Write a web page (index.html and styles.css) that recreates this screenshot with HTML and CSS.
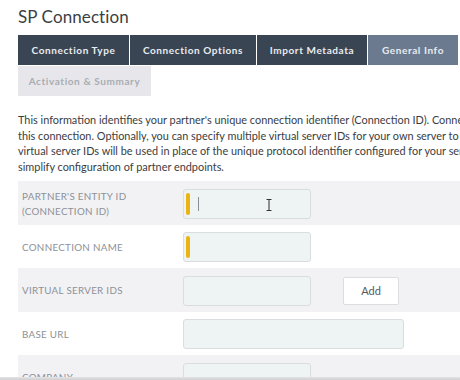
FILE: index.html
```html
<!DOCTYPE html>
<html lang="en">
<head>
    <meta charset="UTF-8">
    <title>SP Connection</title>
    <link rel="stylesheet" href="styles.css">
</head>
<body>
    <div class="page">
        <h1 class="title">SP Connection</h1>

        <div class="tabs">
            <div class="tab tab-type">Connection Type</div>
            <div class="tab tab-options">Connection Options</div>
            <div class="tab tab-import">Import Metadata</div>
            <div class="tab tab-general active">General Info</div>
            <div class="tab tab-summary disabled">Activation &amp; Summary</div>
        </div>

        <p class="intro">
            <span>This information identifies your partner's unique connection identifier (Connection ID). Connection Name represents the plain-language identifier for</span>
            <span>this connection. Optionally, you can specify multiple virtual server IDs for your own server to use when communicating with this partner. If set, these</span>
            <span>virtual server IDs will be used in place of the unique protocol identifier configured for your server in Server Settings. The Base URL may be used to</span>
            <span>simplify configuration of partner endpoints.</span>
        </p>

        <div class="form">
            <div class="row">
                <label class="label">Partner's entity ID<br>(Connection ID)</label>
                <div class="field">
                    <div class="input required focused">
                        <span class="caret"></span>
                        <svg class="ibeam" width="6" height="12" viewBox="0 0 6 12">
                            <path d="M0.5 0.5h5M3 0.5v11M0.5 11.5h5" stroke="#fff" stroke-width="2.2" fill="none"/>
                            <path d="M0.5 0.5h5M3 0.5v11M0.5 11.5h5" stroke="#333" stroke-width="1.1" fill="none"/>
                        </svg>
                    </div>
                </div>
            </div>
            <div class="row">
                <label class="label">Connection name</label>
                <div class="field">
                    <div class="input required"></div>
                </div>
            </div>
            <div class="row">
                <label class="label">Virtual server IDs</label>
                <div class="field">
                    <div class="input"></div>
                    <button class="btn">Add</button>
                </div>
            </div>
            <div class="row">
                <label class="label">Base URL</label>
                <div class="field">
                    <div class="input wide"></div>
                </div>
            </div>
            <div class="row">
                <label class="label">Company</label>
                <div class="field">
                    <div class="input"></div>
                </div>
            </div>
        </div>
    </div>
    <div class="video-bar"></div>
</body>
</html>
```

FILE: styles.css
```css
*
{
    box-sizing: border-box;
}
body
{
    margin: 0;
    background: #fff;
    font-family: Lato, "Open Sans", sans-serif;
    color: #333;
    overflow: hidden;
    height: 380px;
}
.page
{
    padding: 0 0 0 18px;
    width: 700px;
}
.title
{
    margin: 0;
    padding-top: 6px;
    height: 35px;
    font-size: 17px;
    font-weight: 400;
    color: #3b3f44;
    letter-spacing: 0.1px;
}
.tabs
{
    display: flex;
    flex-wrap: wrap;
    width: 442px;
    gap: 1px;
}
.tab
{
    height: 30px;
    background: #394553;
    color: #e9ecf0;
    font-size: 10px;
    font-weight: 700;
    letter-spacing: 0.6px;
    display: flex;
    align-items: center;
    justify-content: center;
}
.tab-type { width: 111px; }
.tab-options { width: 126px; }
.tab-import { width: 110px; }
.tab-general { width: 90px; }
.tab.active
{
    background: #6b7a8f;
}
.tab.disabled
{
    width: 133px;
    background: #e7e7eb;
    color: #a9acb2;
}
.intro
{
    margin: 16px 0 7px;
    font-size: 10.9px;
    line-height: 15.6px;
    color: #3a3d42;
}
.intro span
{
    display: block;
    white-space: nowrap;
}
.form
{
    display: flex;
    flex-direction: column;
}
.row
{
    display: grid;
    grid-template-columns: 165px 1fr;
    align-items: center;
    height: 43.5px;
    padding: 1px 0 0;
}
.row:nth-child(odd)
{
    background: #f2f2f5;
}
.label
{
    padding-left: 4px;
    font-size: 9.8px;
    line-height: 15px;
    text-transform: uppercase;
    letter-spacing: 0.3px;
    color: #8d9197;
}
.field
{
    display: flex;
    align-items: center;
    gap: 32px;
}
.input
{
    position: relative;
    width: 128px;
    height: 30px;
    background: #eef3f4;
    border: 1px solid #d9dde0;
    border-radius: 3px;
}
.input.wide
{
    width: 221px;
}
.input.required::before
{
    content: "";
    position: absolute;
    left: 2px;
    top: 3px;
    width: 4px;
    height: 22px;
    border-radius: 2px;
    background: #e9b414;
}
.caret
{
    position: absolute;
    left: 14px;
    top: 7px;
    width: 1px;
    height: 14px;
    background: #8a8f95;
}
.ibeam
{
    position: absolute;
    left: 82px;
    top: 9px;
}
.btn
{
    width: 56px;
    height: 28px;
    background: #fff;
    border: 1px solid #dcdde0;
    border-radius: 2px;
    font-family: inherit;
    font-size: 11px;
    color: #555a60;
    cursor: pointer;
}
.video-bar
{
    position: fixed;
    left: 0;
    right: 0;
    bottom: 0;
    height: 3px;
    background: linear-gradient(#e4e4e6, #cfcfd2);
}
```
